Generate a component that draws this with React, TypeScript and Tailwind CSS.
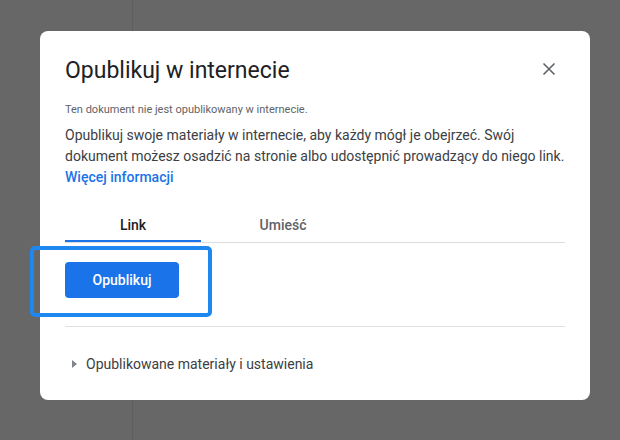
import React from "react";

export default function App() {
  return (
    <div className="relative w-[620px] h-[440px] bg-[#676767] overflow-hidden flex" style={{ fontFamily: "Roboto, 'Liberation Sans', sans-serif" }}>
      <div className="w-[133px] h-full border-r border-[#5e5e5e]" />
      <div className="flex-1" />
      <div className="absolute left-[40px] top-[31px] w-[550px] h-[369px] bg-white rounded-[8px] pl-[25px] pr-[25px] pt-[26px] flex flex-col">
        <div className="flex items-center justify-between h-[28px]">
          <h1 className="text-[23px] leading-[28px] text-[#202124]">Opublikuj w internecie</h1>
          <svg width="14" height="14" viewBox="0 0 14 14" className="mr-[9px] mb-[4px]">
            <path d="M1.5 1.5 L12.5 12.5 M12.5 1.5 L1.5 12.5" stroke="#5f6368" strokeWidth="1.6" />
          </svg>
        </div>
        <p className="mt-[17px] text-[11px] leading-[16px] text-[#5f6368]">Ten dokument nie jest opublikowany w internecie.</p>
        <p className="mt-[7px] text-[14px] leading-[21px] text-[#3c4043]">
          Opublikuj swoje materiały w internecie, aby każdy mógł je obejrzeć. Swój dokument możesz osadzić na stronie albo udostępnić prowadzący do niego link.
          <br />
          <span className="text-[#1a73e8] font-medium">Więcej informacji</span>
        </p>
        <div className="mt-[28px] flex border-b border-[#dadce0]">
          <div className="w-[136px] h-[26px] flex items-start justify-center text-[14px] font-medium text-[#202124] border-b-2 border-[#1a73e8] -mb-px leading-[18px]">Link</div>
          <div className="w-[164px] h-[26px] flex items-start justify-center text-[14px] font-medium text-[#5f6368] leading-[18px]">Umieść</div>
        </div>
        <div className="mt-[19px]">
          <button className="w-[114px] h-[36px] rounded-[4px] bg-[#1a73e8] text-white text-[14px] font-medium">Opublikuj</button>
        </div>
        <div className="mt-[28px] border-t border-[#e0e0e0]" />
        <div className="mt-[27px] flex items-center h-[20px]">
          <svg width="5" height="8" viewBox="0 0 5 8" className="ml-[7px] mr-[9px]">
            <path d="M0 0 L5 4 L0 8 Z" fill="#80868b" />
          </svg>
          <span className="text-[14px] text-[#3c4043] leading-[20px]">Opublikowane materiały i ustawienia</span>
        </div>
      </div>
      <div className="absolute left-[30px] top-[246px] w-[182px] h-[71px] border-[4px] border-[#1e88f0] rounded-[5px]" />
    </div>
  );
}
